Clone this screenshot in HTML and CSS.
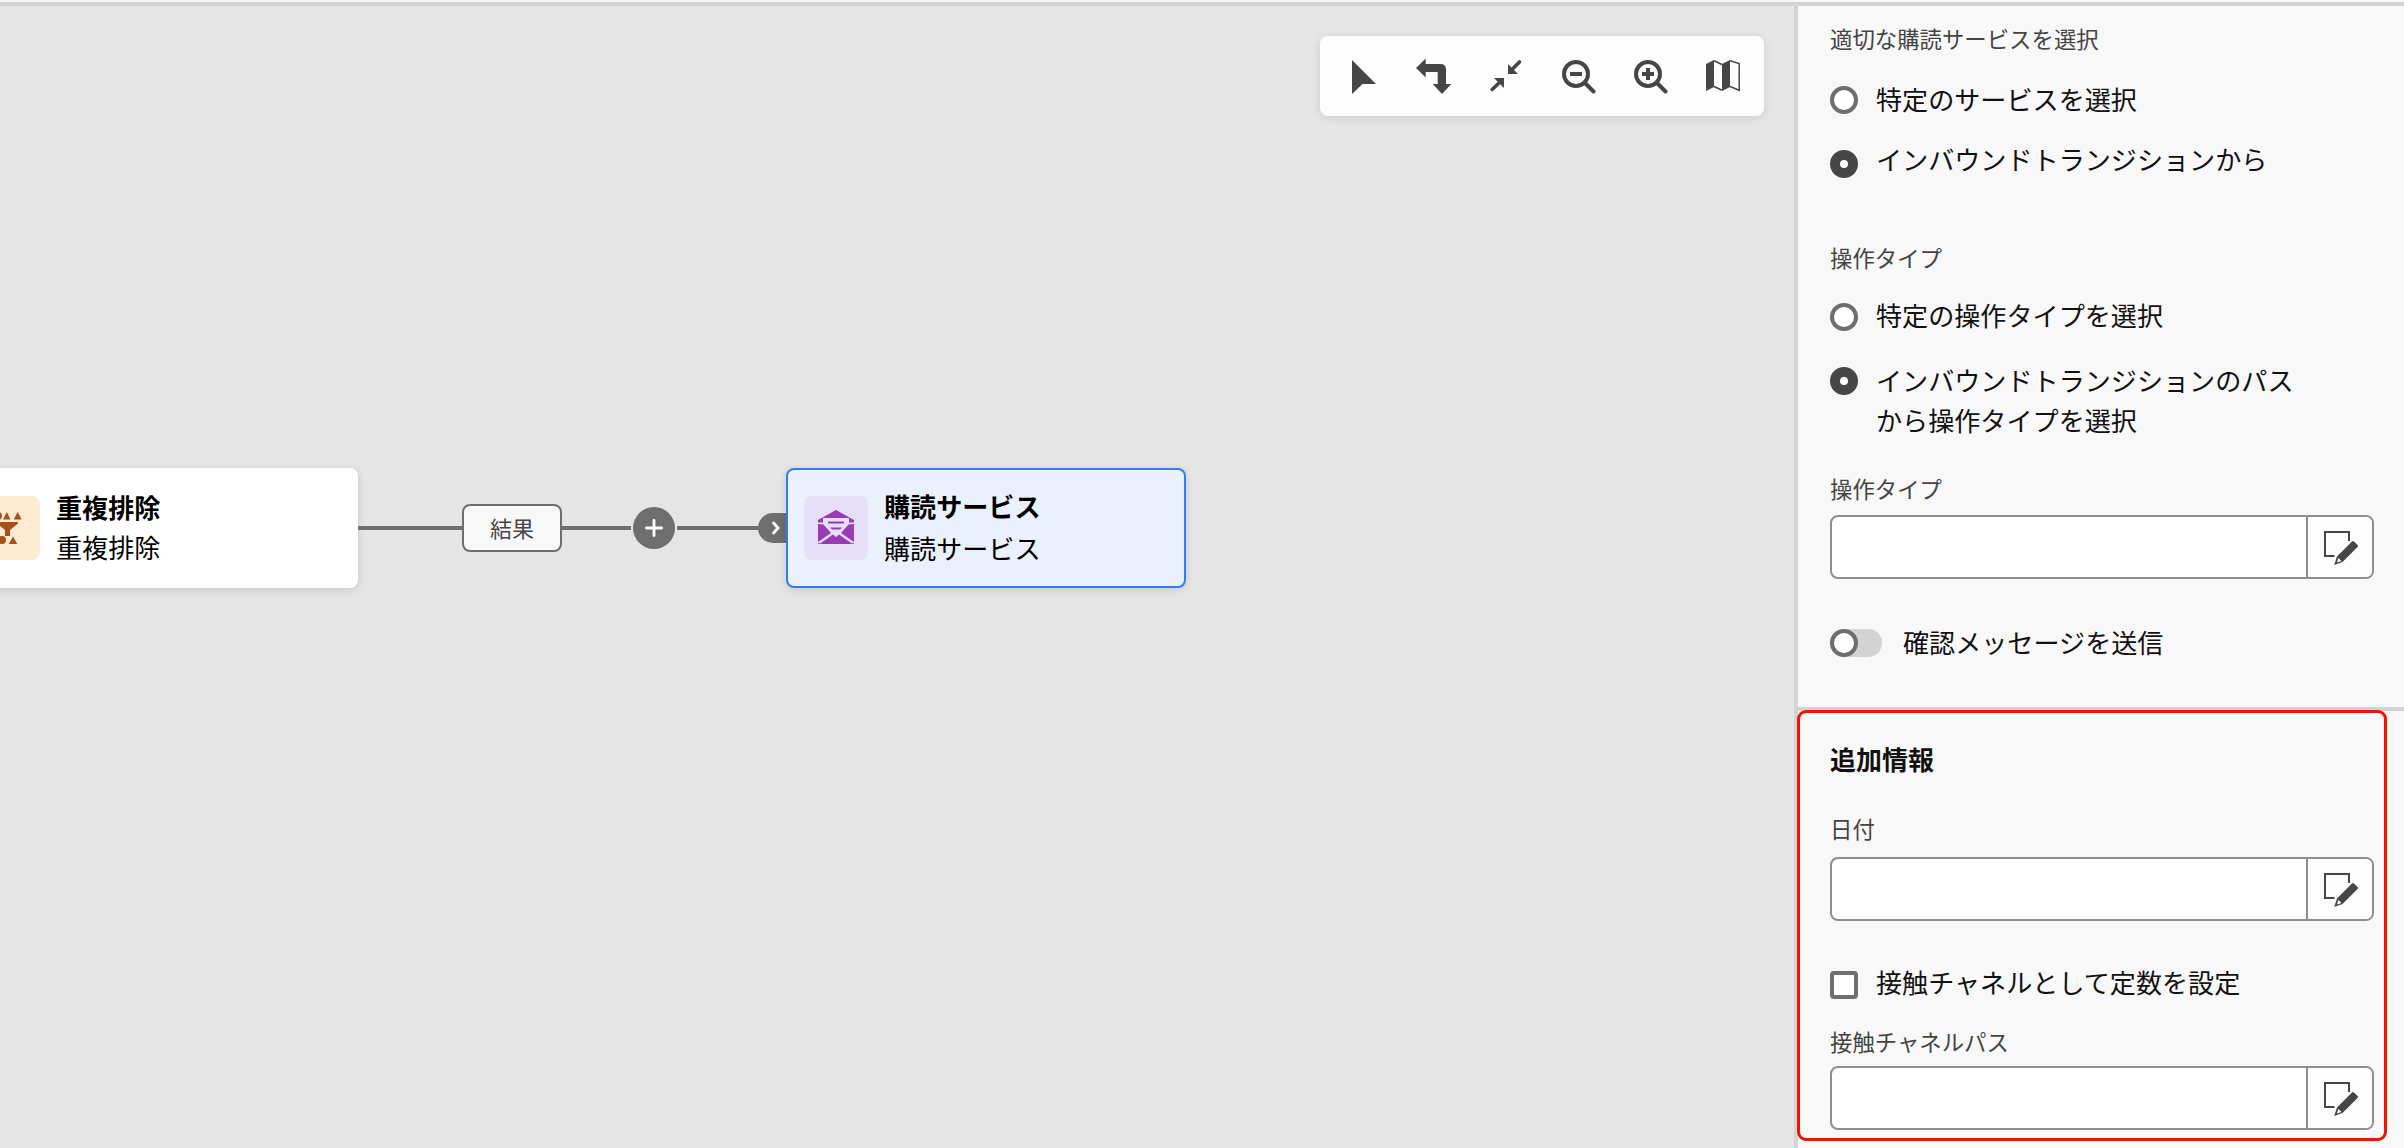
FILE: index.html
```html
<!DOCTYPE html>
<html lang="ja">
<head>
<meta charset="utf-8">
<title>ワークフロー</title>
<link rel="stylesheet" href="styles.css">
</head>
<body>
<svg class="defs" aria-hidden="true">
  <symbol id="edit" viewBox="0 0 36 36">
    <path d="M27 12V3H3v24h9.500" fill="none" stroke="#464646" stroke-width="2"/>
    <path d="M30 12.500q1-1 2 0l3.500 3.500q1 1 0 2L20.500 33l-8.300 3 2.800-8.500z" fill="#464646"/>
    <path d="M16.300 29l3.200 3-4.500 1.500z" fill="#fdfdfd"/>
  </symbol>
</svg>
<div class="app">
  <main class="canvas">
    <div class="toolbar">
      <button class="tool"><svg viewBox="0 0 36 36"><path d="M8 2v34l10.500-10H32z"/></svg></button>
      <button class="tool"><svg viewBox="0 0 36 36"><path d="M9.700.6V6H25a5 5 0 0 1 5 5v15h5.300L26 36l-9.300-10h5V14h-12v5.500L0 10z"/></svg></button>
      <button class="tool"><svg viewBox="0 0 36 36"><path d="M31.500 4L24 11.500M4.200 31.500L12 24" class="ln arrow"/><path d="M20 6v10h10zM6 20h10v10z"/></svg></button>
      <button class="tool"><svg viewBox="0 0 36 36"><circle cx="16" cy="16" r="12" class="ln"/><path d="M25 25l8.500 8.500" class="ln"/><path d="M10 14h12v4H10z"/></svg></button>
      <button class="tool"><svg viewBox="0 0 36 36"><circle cx="16" cy="16" r="12" class="ln"/><path d="M25 25l8.500 8.500" class="ln"/><path d="M10 14h4v-4h4v4h4v4h-4v4h-4v-4h-4z"/></svg></button>
      <button class="tool"><svg viewBox="0 0 36 36"><path d="M2 6l8-4v27l-8 4zM18 6l8-4v27l-8 4z"/><path d="M10 2.700l8 3.800M10 28.500l8 3.800M26 2.700l9.200 2.800v26.800L26 28.500" fill="none" stroke="#464646" stroke-width="1.500"/></svg></button>
    </div>
    <div class="flow">
      <div class="node first">
        <div class="tile orange"><svg viewBox="0 0 64 64"><path d="M27 23.500l3.800-7.500 3.800 7.500zM37.700 23.500l4-7.500 4 7.500zM21 26h21v1.500l-8 6.500v6h-5v-6l-8-6.500zM32.700 48l4.300-7.500 4.300 7.500z"/><circle cx="22" cy="20" r="4"/><circle cx="26" cy="44" r="4"/></svg></div>
        <div class="names"><b>重複排除</b><span>重複排除</span></div>
      </div>
      <i class="line a"></i>
      <div class="result">結果</div>
      <i class="line b"></i>
      <div class="plus"><svg viewBox="0 0 42 42"><path d="M21 13.500v15M13.500 21h15"/></svg></div>
      <i class="line c"></i>
      <div class="port"><svg viewBox="0 0 28 30"><path d="M15.500 10l4.500 5-4.500 5"/></svg></div>
      <div class="node selected">
        <div class="tile purple"><svg viewBox="0 0 64 64"><path d="M14 24l18-10 18 10v2.500h-5V22H19v4.500h-5zM14 28l5.500.5L27 37l-13 9zM50 28l-5.500.5L37 37l13 9zM14 48v-.8h2.500L29 38.500l3 2.500 3-2.500 12.500 8.700H50v.8zM24 25.500h16v2H24zM26 31.500h12l-2 2h-8z"/></svg></div>
        <div class="names"><b>購読サービス</b><span>購読サービス</span></div>
      </div>
    </div>
  </main>
  <aside class="panel">
    <section class="settings">
      <p class="label">適切な購読サービスを選択</p>
      <label class="choice r1"><i class="radio"></i><span>特定のサービスを選択</span></label>
      <label class="choice r2"><i class="radio on"></i><span>インバウンドトランジションから</span></label>
      <p class="label op">操作タイプ</p>
      <label class="choice r3"><i class="radio"></i><span>特定の操作タイプを選択</span></label>
      <label class="choice r4"><i class="radio on"></i><span>インバウンドトランジションのパス<br>から操作タイプを選択</span></label>
      <p class="label op2">操作タイプ</p>
      <div class="field"><div class="value"></div><button><svg><use href="#edit"/></svg></button></div>
      <label class="choice send"><i class="switch"></i><span>確認メッセージを送信</span></label>
    </section>
    <section class="extra">
      <h2>追加情報</h2>
      <p class="label date">日付</p>
      <div class="field"><div class="value"></div><button><svg><use href="#edit"/></svg></button></div>
      <label class="choice constant"><i class="check"></i><span>接触チャネルとして定数を設定</span></label>
      <p class="label path">接触チャネルパス</p>
      <div class="field"><div class="value"></div><button><svg><use href="#edit"/></svg></button></div>
      <div class="highlight"></div>
    </section>
  </aside>
</div>
</body>
</html>
```
FILE: styles.css
```css
* { box-sizing: border-box; }
body { margin: 0; background: #f8f8f8; color: #111; font-family: "Noto Sans CJK JP", sans-serif; font-size: 26.1px; line-height: 40px; overflow: hidden; }
p, h2 { margin: 0; }
i { display: block; flex: none; }
button { border: 0; padding: 0; background: none; display: flex; align-items: center; justify-content: center; }
.defs { display: none; }
.app { height: 1146px; margin-top: 2px; border-top: 4px solid #d3d3d3; display: flex; }
.canvas { width: 1794px; flex: none; background: #e5e5e5; overflow: hidden; padding-top: 30px; }
.toolbar { width: 444px; height: 80px; margin-left: 1320px; padding: 0 6px; display: flex; background: #fdfdfd; border-radius: 8px; box-shadow: 0 2px 8px rgba(0,0,0,.1); }
.tool { width: 72px; }
.tool svg { width: 36px; height: 36px; fill: #464646; }
.tool .ln { fill: none; stroke: #464646; stroke-width: 4; stroke-linecap: round; }
.tool .arrow { stroke-width: 3.6; }
.flow { display: flex; align-items: center; height: 120px; margin: 352px 0 0 -42px; }
.node { width: 400px; height: 120px; flex: none; display: flex; align-items: center; padding-left: 18px; background: #fff; border-radius: 8px; box-shadow: 0 2px 8px rgba(0,0,0,.12); }
.node.selected { background: #eaf0fc; border: 2px solid #2f7df0; padding-left: 16px; }
.tile { width: 64px; height: 64px; border-radius: 8px; flex: none; }
.tile svg { display: block; width: 64px; height: 64px; }
.orange { background: #fdecd1; fill: #a8501a; }
.purple { background: #e6dff9; fill: #9a3bb5; }
.names { margin-left: 16px; display: flex; flex-direction: column; color: #000; }
.names b { font-weight: 700; }
.first .names { padding-bottom: 2px; }
.selected .names b { line-height: 41px; }
.selected .names span { line-height: 43px; }
.line { height: 4px; background: #6e6e6e; }
.a { width: 104px; }
.b { width: 69px; margin-right: 2px; }
.c { width: 81px; margin-left: 2px; }
.result { width: 100px; height: 48px; flex: none; border: 2px solid #6e6e6e; border-radius: 8px; background: #f8f8f8; font-size: 22px; line-height: 42px; text-align: center; color: #464646; }
.plus { width: 42px; height: 42px; flex: none; border-radius: 50%; background: #6e6e6e; }
.port { width: 28px; height: 30px; flex: none; border-radius: 15px 0 0 15px; background: #6e6e6e; }
.plus svg, .port svg { display: block; fill: none; stroke: #fff; stroke-width: 2.8; stroke-linecap: round; }
.panel { flex: 1; border-left: 4px solid #d3d3d3; background: #f8f8f8; }
.settings { height: 705px; padding: 17px 0 0 32px; border-bottom: 4px solid #d3d3d3; }
.label { font-size: 22.4px; line-height: 30px; color: #444; }
.choice { display: flex; }
.choice span { margin: -1px 0 1px 18px; }
.radio, .check { width: 28px; height: 28px; border: 4px solid #6e6e6e; border-radius: 50%; background: #fff; }
.check { border-radius: 4px; }
.radio.on { border: 10px solid #464646; }
.r1 { margin-top: 27px; height: 40px; }
.r2 { margin-top: 20px; height: 40px; }
.r1 .radio { margin-top: 6px; }
.r2 .radio { margin-top: 10px; }
.op { margin-top: 62px; }
.r3 { margin-top: 24px; }
.r3 .radio { margin-top: 7px; }
.r4 { margin-top: 25px; }
.r4 .radio { margin-top: 6px; }
.op2 { margin-top: 32px; }
.field { width: 544px; height: 64px; margin-top: 12px; display: flex; border: 2px solid #8e8e8e; border-radius: 8px; background: #fff; overflow: hidden; }
.value { flex: 1; }
.field button { width: 66px; border-left: 2px solid #8e8e8e; background: #fdfdfd; }
.field svg { width: 36px; height: 36px; overflow: visible; }
.send { margin-top: 44px; }
.switch { width: 52px; height: 28px; margin-top: 6px; border-radius: 14px; background: #d3d3d3; }
.switch::before { content: ""; display: block; box-sizing: border-box; width: 28px; height: 28px; border: 4px solid #6e6e6e; border-radius: 50%; background: #fff; }
.send span { margin-left: 21px; }
.extra { position: relative; padding: 28px 0 0 32px; }
h2 { font-size: 26px; line-height: 40px; }
.date { margin-top: 34px; }
.extra .date + .field { margin-top: 14px; }
.constant { margin-top: 42px; }
.check { margin-top: 8px; }
.path { margin-top: 23px; }
.path + .field { margin-top: 10px; }
.highlight { position: absolute; left: -1px; top: -1px; width: 590px; height: 431px; border: 3px solid #f01400; border-radius: 9px; }
```
